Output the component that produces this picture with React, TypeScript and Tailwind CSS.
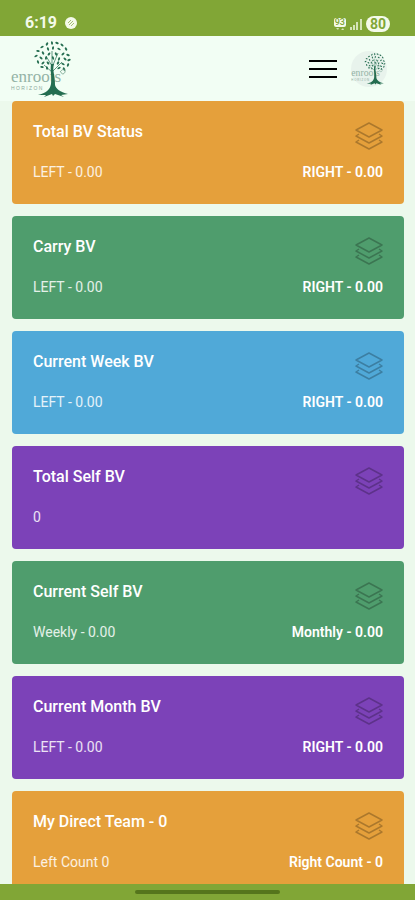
const CARDS = [
  { title: 'Total BV Status', left: 'LEFT - 0.00', right: 'RIGHT - 0.00', color: 'bg-[#e5a03b]' },
  { title: 'Carry BV', left: 'LEFT - 0.00', right: 'RIGHT - 0.00', color: 'bg-[#4f9d6d]' },
  { title: 'Current Week BV', left: 'LEFT - 0.00', right: 'RIGHT - 0.00', color: 'bg-[#50a9d8]' },
  { title: 'Total Self BV', left: '0', right: '', color: 'bg-[#7c42b8]' },
  { title: 'Current Self BV', left: 'Weekly - 0.00', right: 'Monthly - 0.00', color: 'bg-[#4f9d6d]' },
  { title: 'Current Month BV', left: 'LEFT - 0.00', right: 'RIGHT - 0.00', color: 'bg-[#7c42b8]' },
  { title: 'My Direct Team - 0', left: 'Left Count 0', right: 'Right Count - 0', color: 'bg-[#e5a03b]' },
]

// x, y, rotation of every leaf in the crown
const LEAVES = [
  [41, 2, 80], [46, 2, 20], [36, 3, 120], [51, 4, 40], [31, 6, 150], [37, 8, 70], [42, 7, 100], [48, 8, 30], [55, 8, 60],
  [27, 10, 10], [32, 12, 60], [38, 13, 130], [45, 13, 60], [52, 13, 140], [57, 14, 20], [25, 15, 150], [30, 17, 40],
  [35, 17, 100], [42, 17, 70], [48, 18, 110], [54, 18, 40], [58, 19, 160], [27, 21, 70], [32, 22, 140], [37, 22, 50],
  [47, 22, 120], [52, 23, 30], [57, 24, 110], [31, 26, 10], [36, 27, 80], [48, 27, 150], [53, 28, 60],
]

function Logo({ className }: { className: string }) {
  return (
    <svg viewBox="0 0 62 56" className={className} role="img" aria-label="Enroots Horizon">
      <text x="0" y="41" fontSize="17" fontFamily="Liberation Serif, serif" fill="#94b3a6">enroots</text>
      <text x="0" y="49" fontSize="5" fontFamily="Liberation Sans, sans-serif" fill="#8aa99b">H O R I Z O N</text>
      <g fill="#246d50">
        {LEAVES.map(([x, y, angle], i) => (
          <ellipse key={i} cx={x} cy={y} rx="1.8" ry="1" transform={`rotate(${angle} ${x} ${y})`} />
        ))}
        <path d="M40 23l3 0c-2 7 1 10 1 21c1 4 5 7 13 9l-7 1 3 2-9-3-2 2-1-2-8 3 2-2-8 0c8-2 12-5 13-11c1-8-1-12 0-20z" />
      </g>
      <path d="M41 31l-8-7M42 30l9-9M41 25l-6-10M42 24l5-12M41 24v-14" stroke="#246d50" strokeWidth="0.7" fill="none" />
      <path d="M49 31c3-4 6-3 5 0s-4 2-4 0" stroke="#5f927d" strokeWidth="0.7" fill="none" />
    </svg>
  )
}

function LayersIcon() {
  return (
    <svg viewBox="0 0 28 28" className="size-7 fill-none stroke-black/25" strokeWidth="1.5" strokeLinejoin="round" aria-hidden="true">
      <path d="M14 1l13 7-13 7-13-7z" />
      <path d="M4 12l-3 2 13 7 13-7-3-2" />
      <path d="M4 18l-3 2 13 7 13-7-3-2" />
    </svg>
  )
}

function StatusBar() {
  return (
    <div className="flex h-9 shrink-0 items-end justify-between bg-[#81a636] px-[25px] pb-1 text-[#f4faea]">
      <div className="flex items-center gap-2">
        <span className="text-base leading-[18px] font-bold">6:19</span>
        <svg viewBox="0 0 12 12" className="size-3" aria-hidden="true">
          <circle cx="6" cy="6" r="6" fill="#f4faea" />
          <path d="M3 6l3-3M4 8l4-4M6 9l3-3" stroke="#a4bf70" />
        </svg>
      </div>
      <div className="flex items-center gap-1">
        <div className="flex flex-col items-center">
          <span className="rounded-xs bg-[#f4faea] px-px text-[9px] leading-[9px] font-medium text-[#81a636]">93</span>
          <svg viewBox="0 0 8 4" className="h-1 w-2 fill-[#d5e4b8]" aria-hidden="true">
            <path d="M0 1h3l-1 2zM5 3h3l-1-2z" />
          </svg>
        </div>
        <svg viewBox="0 0 12 12" className="size-3 fill-[#d5e4b8]" aria-hidden="true">
          <path d="M0 9h2v3H0zM3 7h2v5H3zM6 4h2v8H6zM10 1h2v11h-2z" />
        </svg>
        <span className="rounded-full bg-[#f4faea] px-1 text-sm leading-4 font-bold text-[#81a636]">80</span>
      </div>
    </div>
  )
}

export default function App() {
  return (
    <div className="flex h-screen flex-col overflow-hidden bg-[#ecf9ec] font-[Roboto,sans-serif]">
      <StatusBar />
      <header className="flex h-[65px] shrink-0 items-center justify-between bg-[#f2fef4] pt-px pr-7 pl-[11px]">
        <Logo className="h-14 w-[62px]" />
        <div className="flex items-center gap-[14px]">
          <button type="button" aria-label="Open menu" className="flex w-7 flex-col gap-[6px]">
            <span className="h-[2px] w-full bg-black" />
            <span className="h-[2px] w-full bg-black" />
            <span className="h-[2px] w-full bg-black" />
          </button>
          <button type="button" aria-label="Profile" className="flex size-9 items-center justify-center rounded-full bg-[#e8f3ec]">
            <Logo className="h-8 w-9" />
          </button>
        </div>
      </header>
      <main className="flex min-h-0 flex-1 flex-col gap-3 overflow-hidden pr-[11px] pl-3">
        {CARDS.map((card) => (
          <section key={card.title} className={`flex h-[103px] shrink-0 flex-col rounded-[4px] px-[21px] pt-[21px] text-white ${card.color}`}>
            <div className="flex h-10 items-start justify-between">
              <h2 className="text-base leading-5 font-medium">{card.title}</h2>
              <LayersIcon />
            </div>
            <div className="flex justify-between text-sm leading-5">
              <span className="text-white/85">{card.left}</span>
              <span className="font-semibold">{card.right}</span>
            </div>
          </section>
        ))}
      </main>
      <footer className="flex h-4 shrink-0 items-center justify-center bg-[#81a636]">
        <div className="h-1 w-[35%] rounded-full bg-[#55751c]" />
      </footer>
    </div>
  )
}
